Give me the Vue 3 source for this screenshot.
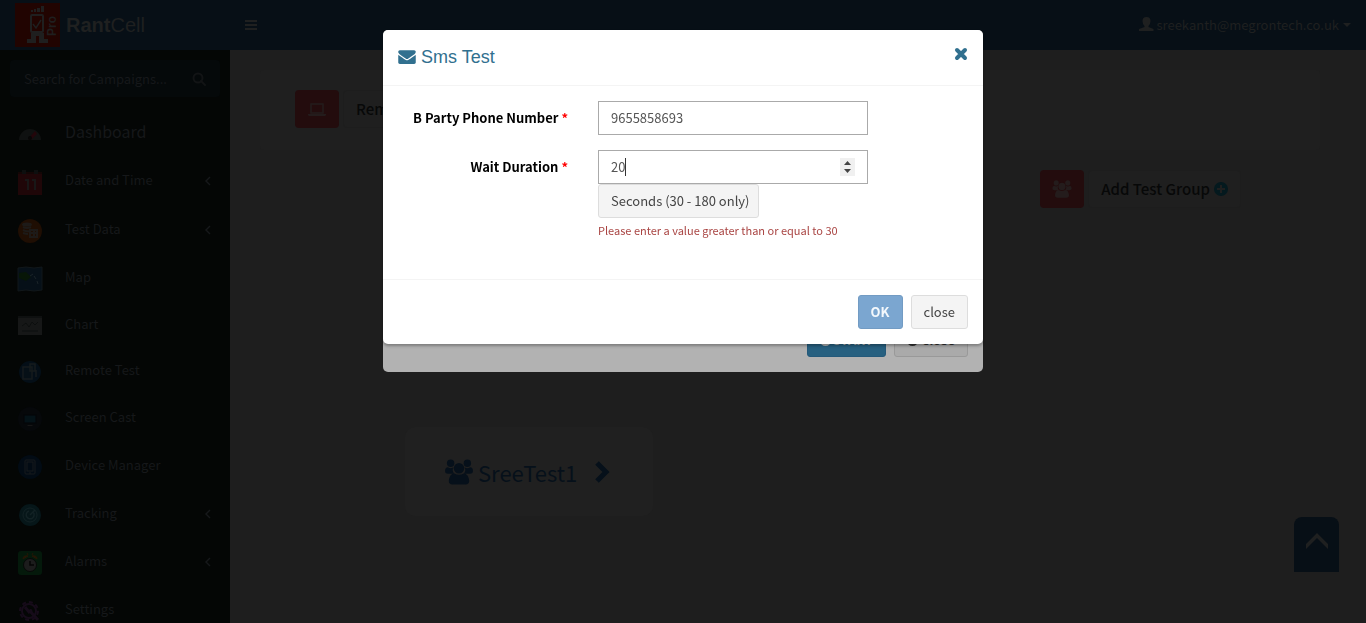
<script setup>
import { ref } from 'vue'

const search = ref('')
const phone = ref('9655858693')
const wait = ref(20)

const items = [
  { id: 'dashboard', label: 'Dashboard' },
  { id: 'date', label: 'Date and Time', more: true },
  { id: 'data', label: 'Test Data', more: true },
  { id: 'map', label: 'Map' },
  { id: 'chart', label: 'Chart' },
  { id: 'remote', label: 'Remote Test' },
  { id: 'cast', label: 'Screen Cast' },
  { id: 'device', label: 'Device Manager' },
  { id: 'tracking', label: 'Tracking', more: true },
  { id: 'alarms', label: 'Alarms', more: true },
  { id: 'settings', label: 'Settings' }
]
</script>

<template>
  <div class="page">
    <svg class="defs" aria-hidden="true">
      <symbol id="users" viewBox="0 0 30 28">
        <circle cx="6" cy="4.500" r="4" /><circle cx="24" cy="4.500" r="4" />
        <path d="M3 9q3 2 6 0-2 4 1 7H3q-3 0-3-3 0-4 3-4zM27 9q-3 2-6 0 2 4-1 7h7q3 0 3-3 0-4-3-4z" />
        <circle cx="15" cy="10" r="5.600" />
        <path d="M10 15.500q5 3 10 0 5 0 6 8 0 4-4 4H8q-4 0-4-4 1-8 6-8z" />
      </symbol>
    </svg>

    <header class="topbar">
      <a class="brand" href="#">
        <svg class="logo" viewBox="0 0 45 44" aria-hidden="true">
          <rect width="45" height="44" fill="#210401" />
          <path d="M16 9v-2h2v2zM19 9V6h2v3zM22 9V5h3v4zM26 9V3h3v6z" fill="#1f1f1f" />
          <rect x="16" y="12" width="12" height="17" rx="1" fill="none" stroke="#1f1f1f" stroke-width="2" />
          <path d="M18 21l3 4 5-8" fill="none" stroke="#1f1f1f" stroke-width="1.500" />
          <path d="M16 30h13v6h4v4h-9v-7h-3v7h-9v-4h4z" fill="#1f1f1f" />
          <text transform="translate(41 33) rotate(-90)" font-size="12" font-weight="bold" font-family="Liberation Sans, sans-serif" fill="#1f1f1f">Pro</text>
        </svg>
        <span><b>Rant</b>Cell</span>
      </a>
      <button class="burger" type="button" aria-label="Toggle navigation">
        <svg viewBox="0 0 12 10" width="12" height="10"><path d="M0 0h12v2H0zM0 4h12v2H0zM0 8h12v2H0z" fill="currentColor" /></svg>
      </button>
      <a class="account" href="#">
        <svg viewBox="0 0 15 14" width="15" height="14"><path d="M7.500 0q4 0 4 4 0 3-2 5v1l5 2v2H0v-2l5.500-2V9q-2-2-2-5 0-4 4-4z" fill="currentColor" /></svg>
        <span>sreekanth@megrontech.co.uk</span>
        <i class="caret"></i>
      </a>
    </header>

    <div class="main">
      <aside class="sidebar">
        <form class="search" @submit.prevent>
          <input v-model="search" type="text" placeholder="Search for Campaigns..." aria-label="Search for Campaigns" />
          <button type="submit" aria-label="Search">
            <svg viewBox="0 0 14 14" width="14" height="14" fill="none" stroke="currentColor" stroke-width="2"><circle cx="6" cy="6" r="4.500" /><path d="M9 9l4 4" stroke-linecap="round" /></svg>
          </button>
        </form>
        <nav>
          <a v-for="item in items" :key="item.id" href="#" :class="['item', item.id]">
            <svg class="icon" viewBox="0 0 24 24" aria-hidden="true">
              <g v-if="item.id === 'dashboard'">
                <path d="M1 19a11 11 0 0 1 22 0z" fill="#121414" /><path d="M10 18l7-8 2 3-6 6z" fill="#2b070d" /><circle cx="12" cy="17" r="2" fill="#080808" />
              </g>
              <g v-else-if="item.id === 'date'">
                <rect y="2" width="24" height="23" fill="#260709" /><path d="M0 2h24v2H0z" fill="#190607" /><path d="M4 0h4v4H4zM16 0h4v4h-4z" fill="#101212" /><path d="M7 10h3v10M14 10h3v10" fill="none" stroke="#1d1c1c" stroke-width="2" />
              </g>
              <g v-else-if="item.id === 'data'">
                <circle cx="12" cy="12" r="12" fill="#261003" />
                <g fill="none" stroke="#24201d" stroke-width="2"><ellipse cx="9" cy="5.500" rx="4" ry="1" /><path d="M5 8q4 2 8 0M5 11q4 2 6 1M5 14q3 1 5 1M12 11h7v7h-7zM12 14h7M16 11v7" /></g>
              </g>
              <g v-else-if="item.id === 'map'">
                <path d="M0 1l8-1 8 1 8-1v23l-8 1-8-1-8 1z" fill="#07131d" stroke="#151c20" /><path d="M1 6l7-1 5 5-5 4-7-3z" fill="#081b08" /><path d="M12 9l3-2M16 9l2 3M19 14l1 3" stroke="#202b31" stroke-width="1" />
              </g>
              <g v-else-if="item.id === 'chart'">
                <rect y="2" width="24" height="19" fill="#1b1c1c" /><path d="M0 2h24v2H0z" fill="#111313" /><path d="M4 12l4-3 3 4 3-5 3 3 3-3M4 17h16" fill="none" stroke="#0f1111" />
              </g>
              <g v-else-if="item.id === 'remote'">
                <circle cx="12" cy="12" r="11" fill="#04111c" /><path d="M5 7h9v12H5zM12 4h5v7h-5zM18 10v7" fill="#07131c" stroke="#1b2023" stroke-width="1.500" />
              </g>
              <g v-else-if="item.id === 'cast'">
                <circle cx="12" cy="12" r="12" fill="#07090c" /><rect x="6" y="8" width="12" height="8" fill="#04151c" stroke="#030507" /><path d="M9 18h6l-1 1h-4z" fill="#1b1b1b" />
              </g>
              <g v-else-if="item.id === 'device'">
                <circle cx="12" cy="12" r="12" fill="#020d18" /><rect x="7" y="5" width="10" height="14" rx="1" fill="none" stroke="#1c2022" /><rect x="9" y="7" width="6" height="9" fill="none" stroke="#1c2022" /><path d="M11 18h2" stroke="#1c2022" />
              </g>
              <g v-else-if="item.id === 'tracking'">
                <circle cx="12" cy="12" r="11" fill="#071a1e" /><g fill="none" stroke="#16292d"><circle cx="12" cy="12" r="7" /><path d="M15 9a4 4 0 1 1-4-1M12 12l5-5" stroke-width="1.500" /></g>
              </g>
              <g v-else-if="item.id === 'alarms'">
                <rect width="24" height="24" rx="3" fill="#041e0d" /><path d="M5 8q0-4 5-3zM19 8q0-4-5-3zM9 2l1 2M15 2l-1 2" fill="#2c1a05" stroke="#2c1a05" /><circle cx="12" cy="14" r="6.500" fill="#222" stroke="#080808" /><path d="M12 10v4h4" fill="none" stroke="#060606" stroke-width="1.500" />
              </g>
              <g v-else fill="none" stroke="#1b0d1f">
                <circle cx="11" cy="12" r="9" stroke-width="2" stroke-dasharray="4 3" /><circle cx="11" cy="12" r="7" stroke-width="2" /><path d="M7 8l4 5 3-2M11 11l9 10" stroke-width="3" />
              </g>
            </svg>
            <span>{{ item.label }}</span>
            <svg v-if="item.more" class="chev" viewBox="0 0 6 10" width="6" height="10"><path d="M5 1L1 5l4 4" fill="none" stroke="currentColor" stroke-width="1.500" /></svg>
          </a>
        </nav>
      </aside>

      <main class="content">
        <section class="panel">
          <button class="tile" type="button">
            <span class="tile-icon"><svg viewBox="0 0 18 13" width="18" height="13"><path d="M3 1h12v9H3z" fill="none" stroke="currentColor" stroke-width="1.500" /><path d="M0 11h18v1l-1 1H1l-1-1z" fill="currentColor" /></svg></span>
            <span class="tile-label">Remote</span>
          </button>
        </section>
        <div class="group-row">
          <button class="tile" type="button">
            <span class="tile-icon"><svg width="20" height="18" fill="currentColor"><use href="#users" /></svg></span>
            <span class="tile-label">Add Test Group
              <svg viewBox="0 0 14 14" width="14" height="14"><circle cx="7" cy="7" r="7" fill="#04191e" /><path d="M7 3v8M3 7h8" stroke="#1f1f1f" stroke-width="2" /></svg>
            </span>
          </button>
        </div>
        <a class="group" href="#">
          <svg width="28" height="26" fill="currentColor"><use href="#users" /></svg>
          <span>SreeTest1</span>
          <svg class="next" viewBox="0 0 16 24" width="16" height="24"><path d="M3 3l9 9-9 9" fill="none" stroke="currentColor" stroke-width="5" /></svg>
        </a>
      </main>
    </div>

    <button class="to-top" type="button" aria-label="Back to top">
      <svg viewBox="0 0 22 16" width="22" height="16"><path d="M0 11L11 0l11 11v5L11 5 0 16z" fill="currentColor" /></svg>
    </button>

    <div class="layer">
      <div class="dialog rear">
        <div class="foot">
          <button class="btn start" type="button"><i class="dot"></i>START</button>
          <button class="btn rear-close" type="button"><i class="dot"></i>close</button>
        </div>
      </div>
    </div>

    <div class="layer">
      <form class="dialog front" role="dialog" aria-labelledby="sms-title" @submit.prevent>
        <div class="head">
          <svg viewBox="0 128 1792 1536" width="18" height="15"><path d="M1792 710v794q0 66-47 113t-113 47h-1472q-66 0-113-47t-47-113v-794q44 49 101 87 362 246 497 345 57 42 92.500 65.500t94.500 48 110 24.500h2q51 0 110-24.500t94.500-48 92.500-65.500q170-123 498-345 57-39 100-87zm0-294q0 79-49 151t-122 123q-376 261-468 325-10 7-42.500 31t-54 38.500-52 32.500-57.500 27-50 9h-2q-23 0-50-9t-57.500-27-52-32.500-54-38.500-42.500-31q-91-64-262-182.500t-205-142.500q-62-42-117-115.500t-55-136.500q0-78 41.500-130t118.500-52h1472q65 0 112.500 47t47.500 113z" fill="currentColor" /></svg>
          <h4 id="sms-title">Sms Test</h4>
          <button class="x" type="button" aria-label="Close">
            <svg viewBox="0 0 14 14" width="14" height="14"><path d="M3 3l8 8M11 3l-8 8" stroke="currentColor" stroke-width="4" stroke-linecap="round" /></svg>
          </button>
        </div>
        <div class="body">
          <div class="field">
            <label for="phone">B Party Phone Number<em>*</em></label>
            <div class="control"><input id="phone" v-model="phone" type="text" /></div>
          </div>
          <div class="field">
            <label for="wait">Wait Duration<em>*</em></label>
            <div class="control">
              <input id="wait" v-model="wait" type="number" aria-describedby="wait-error" />
              <i class="cursor"></i>
              <svg class="stepper" viewBox="0 0 15 18" width="15" height="18" aria-hidden="true"><path d="M0 0h15v18H0z" fill="#f0f0f0" /><path d="M4 7h7L7.500 3zM4 11h7l-3.500 4z" fill="#444" /></svg>
              <button class="btn hint" type="button">Seconds (30 - 180 only)</button>
              <p id="wait-error" class="error">Please enter a value greater than or equal to 30</p>
            </div>
          </div>
        </div>
        <div class="foot">
          <button class="btn ok" type="submit">OK</button>
          <button class="btn" type="button">close</button>
        </div>
      </form>
    </div>
  </div>
</template>

<style>
body { margin: 0; background: #1e1e1e; }
</style>

<style scoped>
* { box-sizing: border-box; }
.page { height: 100vh; overflow: hidden; display: flex; flex-direction: column; font: 13px/20px "Noto Sans CJK JP", "Noto Sans CJK SC", "Open Sans", sans-serif; color: #555; background: #1e1e1e; }
button, input { font: inherit; color: inherit; margin: 0; }
button { background: none; border: 0; padding: 0; }
a { color: inherit; text-decoration: none; }
svg { display: block; flex: none; }
.defs { position: absolute; width: 0; height: 0; }

.topbar { display: flex; align-items: center; flex: none; height: 50px; padding-right: 15px; background: #070f16; color: #1f2020; }
.brand { display: flex; align-items: center; gap: 6px; width: 230px; padding-left: 15px; font: 20px/30px "Liberation Sans", Arial, sans-serif; }
.logo { width: 45px; height: 44px; }
.burger { margin-left: 15px; }
.account { display: flex; align-items: center; gap: 2px; margin-left: auto; }
.account svg { margin-bottom: 2px; }
.caret { margin-left: 2px; border: 4px solid transparent; border-top-color: #1f2020; border-bottom: 0; }

.main { display: flex; flex: 1; min-height: 0; }
.sidebar { flex: none; width: 230px; padding: 10px 0; overflow: hidden; background: #040605; color: #16181a; }
.search { display: flex; height: 37px; margin: 0 10px 11px; padding: 0 14px; align-items: center; background: #05090a; border-radius: 4px; }
.search input { flex: 1; min-width: 0; padding: 0; background: none; border: 0; outline: 0; }
.search input::placeholder { color: #16181a; opacity: 1; }
.search button { color: #121415; }
.item { display: flex; align-items: center; height: 48px; padding: 0 19px 0 18px; }
.item span { flex: 1; margin-left: 23px; padding-bottom: 2px; }
.item.dashboard { font-size: 16px; }
.item.date, .item.data { height: 49px; }
.item.chart, .item.remote { height: 46px; }
.icon { width: 24px; height: 24px; margin-top: 2px; overflow: visible; opacity: .8; }

.content { flex: 1; min-width: 0; padding: 20px 46px 20px 30px; }
.panel { height: 80px; padding: 20px 35px; background: #1f1f1f; border-radius: 4px; }
.group-row { display: flex; justify-content: flex-end; margin: 20px 79px 0 0; }
.tile { display: flex; gap: 4px; height: 38px; color: #070808; font-size: 15px; font-weight: 500; }
.tile-icon { display: grid; place-items: center; width: 44px; height: 38px; background: #230c0d; border-radius: 4px; color: #241c1c; }
.tile-label { display: flex; align-items: center; gap: 4px; height: 38px; padding: 0 12px; background: #1f1f1f; border: 1px solid #1d1d1d; border-radius: 4px; }
.group { display: flex; align-items: center; width: 248px; height: 89px; margin: 219px 0 0 145px; padding-left: 40px; gap: 5px; background: #202020; border-radius: 10px; color: #06101a; font-size: 22px; line-height: 30px; }
.next { margin-left: 12px; }
.to-top { position: fixed; right: 27px; bottom: 51px; display: grid; justify-items: center; align-content: start; width: 45px; height: 55px; padding-top: 16px; background: #070f16; color: #1f2020; border-radius: 8px 8px 0 0; }

.layer { position: fixed; inset: 0; padding: 30px 10px; }
.dialog { display: flex; flex-direction: column; max-width: 600px; margin: 0 auto; border-radius: 5px; }
.rear { min-height: 342px; justify-content: flex-end; background: #b2b2b2; }
.front { background: #fff; box-shadow: 0 2px 3px rgba(0, 0, 0, .3); }
.head { display: flex; align-items: center; gap: 5px; height: 56px; padding: 0 15px 2px; border-bottom: 1px solid #f4f4f4; color: #31708f; }
.head h4 { margin: 0; font: 18px/20px "Liberation Sans", Arial, sans-serif; }
.x { margin: 0 0 5px auto; }
.body { display: grid; gap: 15px; min-height: 193px; padding: 15px 0; align-content: start; }
.field { display: grid; grid-template-columns: 4fr 6fr 2fr; }
.field label { display: flex; justify-content: flex-end; gap: 3px; height: 34px; padding: 7px 15px; font-weight: bold; color: #000; }
.field em { font-style: normal; color: #f00; }
.control { position: relative; padding: 0 15px; }
.control input { display: block; width: 100%; height: 34px; padding: 5px 12px 7px; border: 1px solid #aaa; border-radius: 0; background: #fff; outline: 0; caret-color: transparent; }
.cursor { position: absolute; left: 42px; top: 8px; width: 1px; height: 18px; background: #333; }
.stepper { position: absolute; right: 28px; top: 8px; pointer-events: none; }
.btn { height: 34px; padding: 0 12px; border: 1px solid #ddd; border-radius: 3px; background: #f4f4f4; color: #444; }
.hint { padding-right: 8px; }
.error { margin: 2px 0 0; font-size: 11px; color: #a94442; white-space: nowrap; }
.foot { display: flex; justify-content: flex-end; gap: 8px; padding: 15px; }
.front .foot { border-top: 1px solid #f4f4f4; }
.ok { background: #7ba6d0; border-color: #729bc3; color: #f4f8fc; font-weight: bold; }
.start, .rear-close { display: flex; align-items: center; gap: 4px; font-weight: bold; }
.start { gap: 2px; background: #276080; border-color: #24597a; color: #b2b2b2; }
.rear-close { background: #aaa; border-color: #999; color: #303030; }
.dot { width: 11px; height: 11px; border-radius: 6px; background: currentColor; }
</style>
